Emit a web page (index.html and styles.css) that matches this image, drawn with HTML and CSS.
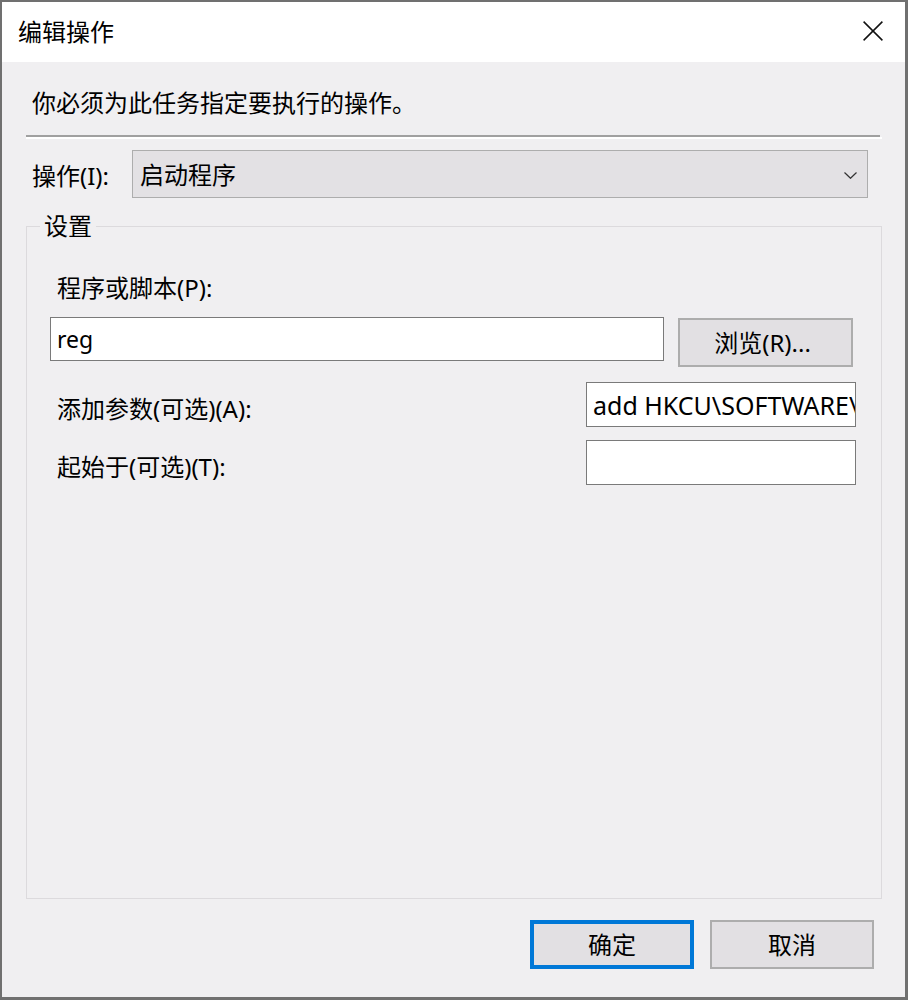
FILE: index.html
```html
<!DOCTYPE html>
<html lang="zh-CN">
<head>
<meta charset="utf-8">
<title>编辑操作</title>
<link rel="stylesheet" href="styles.css">
</head>
<body>
<div class="window">
  <header class="titlebar">
    <span class="title">编辑操作</span>
    <svg class="close" width="20" height="20" viewBox="0 0 20 20" aria-hidden="true"><path d="M0.6 0.6L19.4 19.4M19.4 0.6L0.6 19.4" stroke="#111" stroke-width="1.5" fill="none"/></svg>
  </header>
  <main class="content">
    <p class="intro">你必须为此任务指定要执行的操作。</p>
    <div class="sep"></div>
    <div class="action-row">
      <span class="action-label">操作(I):</span>
      <div class="combo">
        <span class="combo-text">启动程序</span>
        <svg class="chevron" width="13" height="7" viewBox="0 0 13 7" aria-hidden="true"><path d="M0.5 0.5L6.5 6.3L12.5 0.5" stroke="#333" stroke-width="1.2" fill="none"/></svg>
      </div>
    </div>
    <fieldset class="settings">
      <legend>设置</legend>
      <div class="settings-body">
        <div class="field-label">程序或脚本(P):</div>
        <div class="program-row">
          <input class="textbox program" type="text" value="reg">
          <button class="btn browse" type="button">浏览(R)...</button>
        </div>
        <div class="opt-row first">
          <span class="field-label">添加参数(可选)(A):</span>
          <input class="textbox opt" type="text" value="add HKCU\SOFTWARE\Microsoft\Windows\CurrentVersion\Run">
        </div>
        <div class="opt-row second">
          <span class="field-label">起始于(可选)(T):</span>
          <input class="textbox opt" type="text" value="">
        </div>
      </div>
    </fieldset>
    <footer class="buttons">
      <button class="btn ok" type="button">确定</button>
      <button class="btn cancel" type="button">取消</button>
    </footer>
  </main>
</div>
</body>
</html>
```

FILE: styles.css
```css
* { box-sizing: border-box; }

html, body {
  margin: 0;
  padding: 0;
  background: #f0eff1;
}

body {
  font-family: "Noto Sans", "Noto Sans CJK SC", sans-serif;
  font-size: 24px;
  color: #000;
}

.window {
  width: 908px;
  height: 1000px;
  border: 2px solid #707070;
  border-right-width: 3px;
  border-bottom-width: 3px;
  background: #f0eff1;
  display: flex;
  flex-direction: column;
}

.titlebar {
  height: 60px;
  flex: none;
  background: #fff;
  display: flex;
  align-items: center;
  justify-content: space-between;
  padding: 0 22px 0 16px;
}

.title {
  font-size: 24px;
  line-height: 30px;
}

.close {
  display: block;
  margin-top: -2px;
}

.content {
  flex: 1;
  display: flex;
  flex-direction: column;
  padding: 0 23px 0 24px;
}

.intro {
  margin: 25px 0 0 6px;
  line-height: 32px;
  font-size: 24px;
}

.sep {
  margin-top: 16px;
  height: 4px;
  border-bottom: 2px solid #fff;
}
.sep::before {
  content: "";
  display: block;
  height: 2px;
  margin-right: 2px;
  background: #a0a0a0;
}

.action-row {
  margin-top: 11px;
  display: flex;
  align-items: center;
  padding-left: 6px;
  padding-right: 14px;
}

.action-label {
  width: 100px;
  flex: none;
  line-height: 30px;
  padding-top: 4px;
}

.combo {
  flex: 1;
  height: 48px;
  border: 1px solid #adadad;
  background: #e3e1e4;
  display: flex;
  align-items: center;
  justify-content: space-between;
  padding: 0 10px 0 7px;
}

.combo-text {
  line-height: 30px;
  padding-top: 2px;
}

.chevron {
  display: block;
  margin-top: 2px;
}

.settings {
  margin: 14px 0 0 0;
  flex: 1;
  min-width: 0;
  border: 1px solid #dcdadd;
  padding: 0 25px 0 13px;
}

.settings legend {
  padding: 0 4px;
  line-height: 28px;
  font-size: 24px;
}

.settings-body {
  padding: 33px 0 0 10px;
}

.field-label {
  line-height: 30px;
  padding-left: 7px;
  white-space: nowrap;
}

.program-row {
  margin-top: 14px;
  display: flex;
  align-items: flex-start;
}

.textbox {
  font-family: "Noto Sans", "Noto Sans CJK SC", sans-serif;
  font-size: 23px;
  color: #000;
  background: #fff;
  border: 1px solid #7a7a7a;
  border-radius: 0;
  padding: 0 0 0 6px;
  margin: 0;
  outline: none;
}

.program {
  width: 614px;
  height: 44px;
}

.btn {
  font-family: "Noto Sans", "Noto Sans CJK SC", sans-serif;
  font-size: 24px;
  color: #000;
  background: #e2e0e3;
  border: 2px solid #adadad;
  border-radius: 0;
  padding: 0;
  margin: 0;
  line-height: 30px;
}

.browse {
  width: 175px;
  height: 49px;
  margin-left: 14px;
  margin-top: 1px;
  padding-right: 6px;
}

.opt-row {
  display: flex;
  align-items: center;
  justify-content: space-between;
}
.opt-row.first { margin-top: 15px; }
.opt-row.second { margin-top: 13px; }
.opt-row .field-label { margin-top: 8px; }

.opt {
  width: 270px;
  height: 45px;
  flex: none;
  font-size: 25px;
}

.buttons {
  display: flex;
  justify-content: flex-end;
  gap: 16px;
  padding: 21px 8px 28px 0;
}

.buttons .btn {
  width: 164px;
  height: 49px;
}

.buttons .ok {
  border: 4px solid #0078d7;
}
```
